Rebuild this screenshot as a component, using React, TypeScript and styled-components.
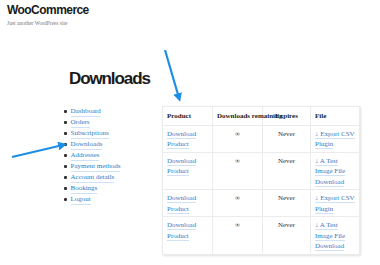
import React from "react";
import styled, { createGlobalStyle } from "styled-components";

const GlobalStyle = createGlobalStyle`
    html, body {
        margin: 0;
        padding: 0;
        background: #ffffff;
    }
    body {
        font-family: "Liberation Serif", "Times New Roman", serif;
        color: #333333;
    }
`;

interface DownloadRow {
    file: string[];
}

const rows: DownloadRow[] = [
    { file: ["↓ Export CSV", "Plugin"] },
    { file: ["↓ A Test", "Image File", "Download"] },
    { file: ["↓ Export CSV", "Plugin"] },
    { file: ["↓ A Test", "Image File", "Download"] },
];

const navItems = [
    "Dashboard",
    "Orders",
    "Subscriptions",
    "Downloads",
    "Addresses",
    "Payment methods",
    "Account details",
    "Bookings",
    "Logout",
];

const App: React.FC = () => {
    return (
        <Page>
            <GlobalStyle />
            <SiteHeader>
                <SiteTitle>WooCommerce</SiteTitle>
                <Tagline>Just another WordPress site</Tagline>
            </SiteHeader>
            <Content>
                <Heading>Downloads</Heading>
                <Columns>
                    <Nav>
                        {navItems.map((item) => (
                            <NavItem key={item}>
                                <Link>{item}</Link>
                            </NavItem>
                        ))}
                    </Nav>
                    <Table>
                        <colgroup>
                            <col style={{ width: 50 }} />
                            <col style={{ width: 50 }} />
                            <col style={{ width: 48 }} />
                            <col style={{ width: 49 }} />
                        </colgroup>
                        <thead>
                            <tr>
                                <Th>Product</Th>
                                <Th>Downloads remaining</Th>
                                <Th align="center">Expires</Th>
                                <Th>File</Th>
                            </tr>
                        </thead>
                        <tbody>
                            {rows.map((row, i) => (
                                <tr key={i}>
                                    <Td>
                                        <Link>Download</Link>
                                        <br />
                                        <Link>Product</Link>
                                    </Td>
                                    <Td align="center">∞</Td>
                                    <Td align="center">Never</Td>
                                    <Td>
                                        {row.file.map((line, j) => (
                                            <React.Fragment key={j}>
                                                {j > 0 && <br />}
                                                <Link>{line}</Link>
                                            </React.Fragment>
                                        ))}
                                    </Td>
                                </tr>
                            ))}
                        </tbody>
                    </Table>
                </Columns>
            </Content>
            <Arrows width="380" height="265" viewBox="0 0 380 265">
                <defs>
                    <marker
                        id="head"
                        markerWidth="4"
                        markerHeight="4"
                        refX="2.2"
                        refY="2"
                        orient="auto"
                    >
                        <path d="M0,0 L4,2 L0,4 Z" fill="#1c8ee6" />
                    </marker>
                </defs>
                <line
                    x1="165"
                    y1="50"
                    x2="179"
                    y2="98"
                    stroke="#1c8ee6"
                    strokeWidth="2.2"
                    markerEnd="url(#head)"
                />
                <line
                    x1="12"
                    y1="157"
                    x2="63"
                    y2="145"
                    stroke="#1c8ee6"
                    strokeWidth="2.2"
                    markerEnd="url(#head)"
                />
            </Arrows>
        </Page>
    );
};

const Page = styled.div`
    position: relative;
    width: 380px;
    height: 265px;
    overflow: hidden;
`;

const SiteHeader = styled.header`
    padding: 3px 7px 0;
`;

const SiteTitle = styled.div`
    font-family: "Liberation Sans", Arial, sans-serif;
    font-weight: 700;
    font-size: 12px;
    letter-spacing: -0.55px;
    line-height: 14px;
    color: #1a1a1a;
`;

const Tagline = styled.div`
    font-size: 5.5px;
    line-height: 8px;
    margin-top: 2px;
    color: #777777;
`;

const Content = styled.main`
    margin: 41px 0 0 62px;
`;

const Heading = styled.h1`
    margin: 0 0 16px 7px;
    font-family: "Liberation Sans", Arial, sans-serif;
    font-weight: 700;
    font-size: 17px;
    letter-spacing: -1.1px;
    line-height: 22px;
    color: #1a1a1a;
`;

const Columns = styled.div`
    display: flex;
    align-items: flex-start;
`;

const Nav = styled.ul`
    width: 100px;
    margin: 0;
    padding: 0;
    list-style: none;
`;

const NavItem = styled.li`
    display: flex;
    align-items: center;
    gap: 4px;
    height: 11px;
    font-size: 7px;
    line-height: 11px;

    &::before {
        content: "";
        width: 2.5px;
        height: 2.5px;
        margin-left: 2px;
        background: #333333;
        border-radius: 1px;
    }
`;

const Link = styled.span`
    color: #2f7cc4;
    border-bottom: 1.5px solid #cfe1f2;
    line-height: 9px;
`;

const Table = styled.table`
    border-collapse: collapse;
    table-layout: fixed;
    width: 197px;
    font-size: 7px;
    line-height: 10.5px;
    border: 1px solid #e8e8e8;
    box-shadow: 1px 1px 2px rgba(0, 0, 0, 0.12);
`;

const Th = styled.th<{ align?: string }>`
    padding: 3.5px 4px;
    text-align: ${({ align }) => align || "left"};
    font-weight: 700;
    color: #222222;
    white-space: nowrap;
    overflow: visible;
    border: 1px solid #ebebeb;
`;

const Td = styled.td<{ align?: string }>`
    padding: 3px 4px 2px;
    vertical-align: top;
    text-align: ${({ align }) => align || "left"};
    color: #333333;
    border: 1px solid #ebebeb;
`;

const Arrows = styled.svg`
    position: absolute;
    left: 0;
    top: 0;
    pointer-events: none;
`;

export default App;
